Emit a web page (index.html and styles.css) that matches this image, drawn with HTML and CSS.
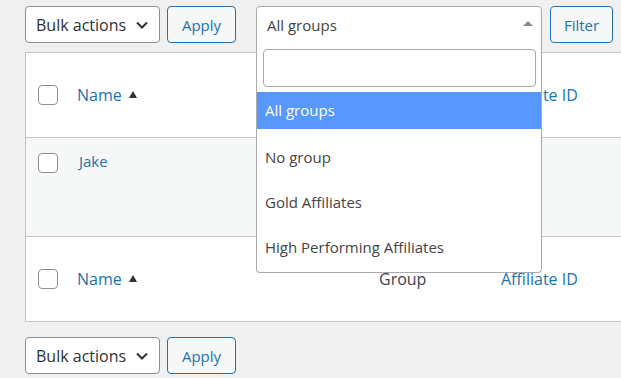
FILE: index.html
```html
<!DOCTYPE html>
<html lang="en">
<head>
    <meta charset="UTF-8">
    <title>Affiliates</title>
    <link rel="stylesheet" href="styles.css">
</head>
<body>

<div class="wrap">
    <div class="tablenav top">
        <div class="select-box bulk">
            <span>Bulk actions</span>
            <svg class="chevron" width="14" height="10" viewBox="0 0 14 10"><path d="M2 2.5 L7 7.5 L12 2.5" fill="none" stroke="#2c3338" stroke-width="2"/></svg>
        </div>
        <button class="btn btn-apply">Apply</button>

        <div class="group-select">
            <div class="group-current">
                <span>All groups</span>
                <span class="up-arrow"></span>
            </div>
            <div class="dropdown">
                <div class="search-wrap"><input type="text" class="search"></div>
                <ul class="options">
                    <li class="option active">All groups</li>
                    <li class="option">No group</li>
                    <li class="option">Gold Affiliates</li>
                    <li class="option">High Performing Affiliates</li>
                </ul>
            </div>
        </div>
        <button class="btn btn-filter">Filter</button>
    </div>

    <div class="table-wrap">
        <table class="list">
            <thead>
                <tr>
                    <td class="col-cb"><span class="cb"></span></td>
                    <th class="col-name"><a href="#">Name</a> <span class="sort"></span></th>
                    <th class="col-group">Group</th>
                    <th class="col-id"><a href="#">Affiliate ID</a></th>
                </tr>
            </thead>
            <tbody>
                <tr class="alt">
                    <td class="col-cb"><span class="cb"></span></td>
                    <td class="col-name"><a href="#">Jake</a></td>
                    <td class="col-group"></td>
                    <td class="col-id"></td>
                </tr>
            </tbody>
            <tfoot>
                <tr>
                    <td class="col-cb"><span class="cb"></span></td>
                    <th class="col-name"><a href="#">Name</a> <span class="sort"></span></th>
                    <th class="col-group">Group</th>
                    <th class="col-id"><a href="#">Affiliate ID</a></th>
                </tr>
            </tfoot>
        </table>
    </div>

    <div class="tablenav bottom">
        <div class="select-box bulk">
            <span>Bulk actions</span>
            <svg class="chevron" width="14" height="10" viewBox="0 0 14 10"><path d="M2 2.5 L7 7.5 L12 2.5" fill="none" stroke="#2c3338" stroke-width="2"/></svg>
        </div>
        <button class="btn btn-apply">Apply</button>
    </div>
</div>

</body>
</html>
```

FILE: styles.css
```css
body {
    margin: 0;
    background-color: #f0f0f1;
    font-family: "Open Sans", "Noto Sans", sans-serif;
    font-size: 15px;
    color: #3c434a;
    overflow: hidden;
}
.wrap {
    padding: 6px 0 0 25px;
}
.tablenav {
    display: flex;
    align-items: flex-start;
    height: 37px;
}
.tablenav.top {
    margin-bottom: 9px;
}
.tablenav.bottom {
    margin-top: 15px;
}
.select-box {
    box-sizing: border-box;
    height: 37px;
    width: 135px;
    background: #fff;
    border: 1px solid #8c8f94;
    border-radius: 4px;
    display: flex;
    align-items: center;
    justify-content: space-between;
    padding: 0 10px 0 10px;
    color: #2c3338;
    font-size: 16px;
}
.chevron {
    margin-top: 1px;
}
.btn {
    box-sizing: border-box;
    height: 37px;
    padding: 0;
    background: #f6f7f7;
    border: 1px solid #2271b1;
    border-radius: 4px;
    color: #2271b1;
    font-family: inherit;
    font-size: 15px;
}
.btn-apply {
    width: 69px;
    margin-left: 7px;
}
.btn-filter {
    width: 63px;
    margin-left: 8px;
}
.group-select {
    position: relative;
    margin-left: 20px;
    width: 286px;
    z-index: 2;
}
.group-current {
    box-sizing: border-box;
    height: 38px;
    background: #fff;
    border: 1px solid #aaa;
    border-radius: 4px 4px 0 0;
    display: flex;
    align-items: center;
    justify-content: space-between;
    padding: 0 8px 0 10px;
    color: #444;
}
.up-arrow {
    width: 0;
    height: 0;
    border-left: 5px solid transparent;
    border-right: 5px solid transparent;
    border-bottom: 5px solid #888;
    margin-top: -4px;
}
.dropdown {
    position: absolute;
    top: 37px;
    left: 0;
    right: 0;
    box-sizing: border-box;
    background: #fff;
    border: 1px solid #aaa;
    border-top: none;
    border-radius: 0 0 4px 4px;
    padding-bottom: 2px;
}
.search-wrap {
    padding: 6px 5px 5px 6px;
}
.search {
    box-sizing: border-box;
    display: block;
    width: 100%;
    height: 38px;
    border: 1px solid #aaa;
    border-radius: 4px;
    outline: none;
}
.options {
    list-style: none;
    margin: 0;
    padding: 0;
}
.option {
    height: 45px;
    line-height: 45px;
    padding-left: 8px;
    color: #444;
}
.option.active {
    height: 37px;
    line-height: 37px;
    margin-bottom: 6px;
    background: #5897fb;
    color: #fff;
}
.table-wrap {
    overflow: hidden;
}
.list {
    width: 640px;
    border-collapse: collapse;
    background: #fff;
    border: 1px solid #c3c4c7;
    table-layout: fixed;
}
.list td, .list th {
    text-align: left;
    font-weight: normal;
    padding: 0;
}
.list a {
    color: #2271b1;
    text-decoration: none;
}
.list thead tr {
    height: 85px;
    border-bottom: 1px solid #c3c4c7;
}
.list tfoot tr {
    height: 85px;
    border-top: 1px solid #c3c4c7;
}
.list tbody tr {
    height: 99px;
}
.list tr.alt {
    background: #f6f7f7;
}
.list tbody td {
    vertical-align: top;
    padding-top: 15px;
}
.list tbody .col-name {
    padding-top: 13px;
}
.col-cb {
    width: 51px;
}
.col-cb .cb {
    display: block;
    box-sizing: border-box;
    width: 20px;
    height: 20px;
    margin-left: 12px;
    border: 1px solid #8c8f94;
    border-radius: 4px;
    background: #fff;
}
.list .col-name {
    width: 302px;
    font-size: 16px;
}
.list tbody .col-name {
    padding-left: 2px;
    font-size: 15px;
}
.col-group {
    width: 122px;
    font-size: 16px;
}
.list .col-id {
    font-size: 16px;
}
.sort {
    display: inline-block;
    width: 0;
    height: 0;
    border-left: 4.5px solid transparent;
    border-right: 4.5px solid transparent;
    border-bottom: 7px solid #2c3338;
    margin-left: 3px;
    vertical-align: 3px;
}
```
